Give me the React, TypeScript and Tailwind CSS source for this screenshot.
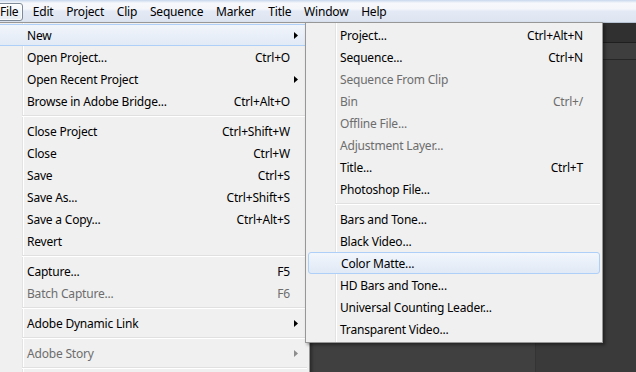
type Entry =
  | { sep: true }
  | {
      sep?: false;
      label: string;
      shortcut?: string;
      arrow?: boolean;
      disabled?: boolean;
      active?: boolean;
    };

const FONT = "font-['Noto_Sans','Noto_Sans_CJK_KR',sans-serif]";

const fileMenu: Entry[] = [
  { label: "New", arrow: true, active: true },
  { label: "Open Project...", shortcut: "Ctrl+O" },
  { label: "Open Recent Project", arrow: true },
  { label: "Browse in Adobe Bridge...", shortcut: "Ctrl+Alt+O" },
  { sep: true },
  { label: "Close Project", shortcut: "Ctrl+Shift+W" },
  { label: "Close", shortcut: "Ctrl+W" },
  { label: "Save", shortcut: "Ctrl+S" },
  { label: "Save As...", shortcut: "Ctrl+Shift+S" },
  { label: "Save a Copy...", shortcut: "Ctrl+Alt+S" },
  { label: "Revert" },
  { sep: true },
  { label: "Capture...", shortcut: "F5" },
  { label: "Batch Capture...", shortcut: "F6", disabled: true },
  { sep: true },
  { label: "Adobe Dynamic Link", arrow: true },
  { sep: true },
  { label: "Adobe Story", arrow: true, disabled: true },
  { sep: true },
];

const newMenu: Entry[] = [
  { label: "Project...", shortcut: "Ctrl+Alt+N" },
  { label: "Sequence...", shortcut: "Ctrl+N" },
  { label: "Sequence From Clip", disabled: true },
  { label: "Bin", shortcut: "Ctrl+/", disabled: true },
  { label: "Offline File...", disabled: true },
  { label: "Adjustment Layer...", disabled: true },
  { label: "Title...", shortcut: "Ctrl+T" },
  { label: "Photoshop File..." },
  { sep: true },
  { label: "Bars and Tone..." },
  { label: "Black Video..." },
  { label: "Color Matte...", active: true },
  { label: "HD Bars and Tone..." },
  { label: "Universal Counting Leader..." },
  { label: "Transparent Video..." },
];

const menuBar = ["File", "Edit", "Project", "Clip", "Sequence", "Marker", "Title", "Window", "Help"];

function Arrow({ disabled }: { disabled?: boolean }) {
  return (
    <svg width="4" height="7" viewBox="0 0 4 7" className="block">
      <polygon points="0,0 4,3.5 0,7" fill={disabled ? "#8d8d8d" : "#000"} />
    </svg>
  );
}

function FileRow({ item }: { item: Entry }) {
  if (item.sep) {
    return (
      <div className="flex h-[8px] items-center pl-[23px]">
        <div className="h-[2px] w-full border-t border-[#e0e0e0] border-b border-b-white" />
      </div>
    );
  }
  return (
    <div
      className={`relative flex h-[22px] items-center pl-[28px] pt-[1px] ${
        item.active
          ? "-ml-[2px] pl-[30px] border-y border-[#aecff7] bg-gradient-to-b from-[#f1f5fb] to-[#e2eaf6]"
          : ""
      } ${item.disabled ? "text-[#6d6d6d]" : "text-[#000]"}`}
    >
      <span className="flex-1 whitespace-nowrap">{item.label}</span>
      {item.shortcut && <span className="whitespace-nowrap">{item.shortcut}</span>}
      <span className="flex w-[17px] pl-[4px]">{item.arrow && <Arrow disabled={item.disabled} />}</span>
    </div>
  );
}

function SubRow({ item }: { item: Entry }) {
  if (item.sep) {
    return (
      <div className="flex h-[8px] items-center pl-[27px]">
        <div className="h-[2px] w-full border-t border-[#e0e0e0] border-b border-b-white" />
      </div>
    );
  }
  return (
    <div
      className={`relative flex h-[22px] items-center pl-[32px] pr-[17px] pt-[1px] ${
        item.active
          ? "rounded-[3px] border border-[#aecff7] bg-gradient-to-b from-[#f2f6fc] to-[#e0e9f6] pl-[31px] pr-[16px]"
          : ""
      } ${item.disabled ? "text-[#6d6d6d]" : "text-[#000]"}`}
    >
      <span className="flex-1 whitespace-nowrap">{item.label}</span>
      {item.shortcut && <span className="whitespace-nowrap">{item.shortcut}</span>}
    </div>
  );
}

export default function App() {
  return (
    <div
      className={`relative h-[372px] w-[636px] overflow-hidden text-[12px] leading-none tracking-[-0.2px] ${FONT}`}
    >
      {/* menu bar */}
      <div className="flex h-[22px] items-center bg-[linear-gradient(to_bottom,#c8d7ee_0px,#f6f8fb_3px,#f4f6fa_9px,#e4eaf5_11px,#dee5f2_21px)] pt-[1px] text-[#000]">
        {menuBar.map((m, i) =>
          i === 0 ? (
            <div
              key={m}
              className="-ml-[6px] mr-[3px] flex h-[18px] items-center rounded-[3px] border border-[#7f8a99] bg-gradient-to-b from-[#fbfcfd] to-[#e8edf4] pl-[5px] pr-[4px] shadow-[inset_0_0_0_1px_rgba(255,255,255,0.7)]"
            >
              {m}
            </div>
          ) : (
            <div key={m} className="px-[6.4px]">
              {m}
            </div>
          )
        )}
      </div>

      {/* application behind the menus */}
      <div className="flex h-[350px] flex-col border-t border-[#b7c2d2] bg-[#3b3b3b]">
        <div className="h-[20px] border-b border-[#1f1f1f] bg-[#303030]" />
        <div className="h-[17px] border-b border-[#262626] bg-[#3e3e3e]" />
        <div className="flex flex-1">
          <div className="w-[310px] border-r border-[#2a2a2a] bg-[#404040]" />
          <div className="w-[226px] border-r border-[#343434] bg-[#404040]" />
          <div className="flex-1 bg-[#3a3a3a]" />
        </div>
      </div>

      {/* File menu */}
      <div className="absolute left-[-4px] top-[22px] h-[360px] w-[314px] border border-[#979797] bg-[#f0f0f0] px-[2px] pt-[1px] shadow-[2px_2px_3px_rgba(0,0,0,0.35)]">
        <div className="absolute bottom-0 left-[25px] top-0 w-[2px] border-l border-[#e2e3e3] bg-white" />
        <div className="relative">
          {fileMenu.map((it, i) => (
            <FileRow key={i} item={it} />
          ))}
        </div>
      </div>

      {/* New submenu */}
      <div className="absolute left-[305px] top-[22px] h-[321px] w-[298px] border border-[#979797] bg-[#f0f0f0] px-[2px] pb-[2px] pt-[1px] shadow-[2px_2px_3px_rgba(0,0,0,0.4)]">
        <div className="absolute bottom-0 left-[29px] top-0 w-[2px] border-l border-[#e2e3e3] bg-white" />
        <div className="relative">
          {newMenu.map((it, i) => (
            <SubRow key={i} item={it} />
          ))}
        </div>
      </div>
    </div>
  );
}
